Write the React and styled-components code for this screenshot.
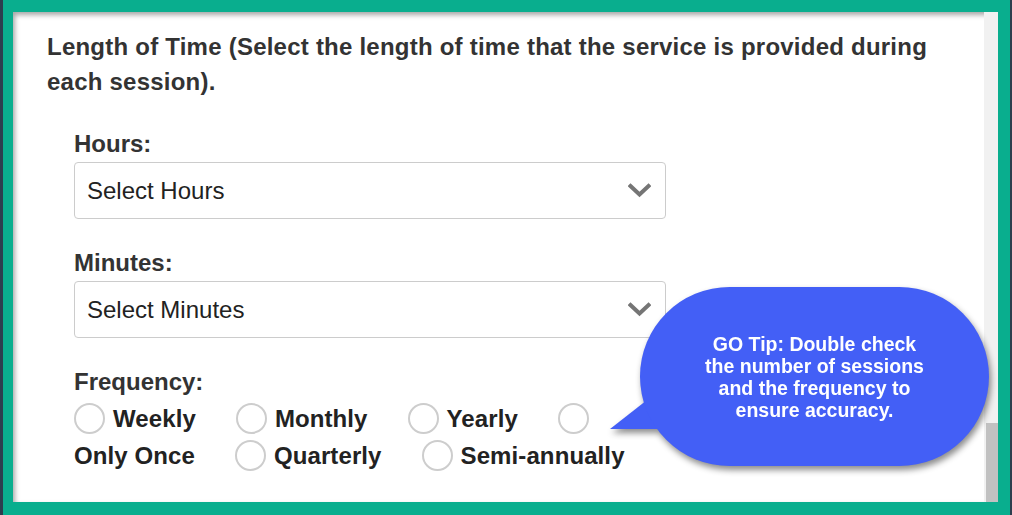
import React from 'react';
import styled, { createGlobalStyle } from 'styled-components';

const GlobalStyle = createGlobalStyle`
  html, body {
    margin: 0;
    padding: 0;
    overflow: hidden;
  }
  body {
    font-family: "Liberation Sans", Arial, sans-serif;
  }
`;

const Frame = styled.div`
  box-sizing: border-box;
  width: 1012px;
  height: 515px;
  display: flex;
  padding: 0 2px 0 3px;
  background: #2c3e4e;
`;

const TealBorder = styled.div`
  flex: 1;
  display: flex;
  padding: 12px 12px 13px 10px;
  background: #09ae8e;
`;

const Panel = styled.div`
  position: relative;
  flex: 1;
  display: flex;
  overflow: hidden;
  background: #fff;
  box-shadow: inset 2px 3px 5px rgba(0, 0, 0, 0.35);
`;

const Content = styled.div`
  flex: 1;
  padding: 17px 20px 0 34px;
`;

const Heading = styled.h3`
  margin: 0 0 31px;
  color: #333;
  font-size: 24px;
  font-weight: 700;
  line-height: 35px;
  letter-spacing: 0.23px;
`;

const Group = styled.div`
  margin: 0 0 30px 27px;
  width: 592px;
`;

const Label = styled.div`
  margin-bottom: 4px;
  color: #333;
  font-size: 24px;
  font-weight: 700;
  line-height: 28px;
`;

const SelectBox = styled.div`
  box-sizing: border-box;
  height: 57px;
  display: flex;
  align-items: center;
  justify-content: space-between;
  padding: 0 14px 0 12px;
  border: 1px solid #ccc;
  border-radius: 4px;
  color: #222;
  font-size: 24px;

  svg {
    display: block;
  }
`;

const Options = styled.div`
  display: flex;
  flex-wrap: wrap;
  align-items: center;
`;

const Option = styled.div`
  height: 37px;
  display: flex;
  align-items: center;
  margin-right: ${(p) => (p.$tight ? '8px' : '40px')};
  color: #222;
  font-size: 24px;
  font-weight: 700;
  letter-spacing: 0.1px;
`;

const Radio = styled.span`
  box-sizing: border-box;
  width: 31px;
  height: 31px;
  margin-right: ${(p) => (p.$alone ? '0' : '8px')};
  border: 2px solid #cdcdcd;
  border-radius: 50%;
  background: #fff;
`;

const Scrollbar = styled.div`
  width: 14px;
  display: flex;
  flex-direction: column;
  justify-content: flex-end;
  padding-left: 2px;
  box-sizing: border-box;
  background: #f1f1f1;
`;

const Thumb = styled.div`
  height: 79px;
  background: #c1c1c1;
`;

const Bubble = styled.div`
  position: absolute;
  left: 597px;
  top: 275px;
  width: 379px;
  height: 179px;
  filter: drop-shadow(2px 4px 3px rgba(0, 0, 0, 0.45));

  &::before {
    content: '';
    position: absolute;
    left: 0;
    top: 100px;
    width: 60px;
    height: 42px;
    background: #435ff6;
    clip-path: polygon(0 100%, 58% 35%, 100% 0, 100% 100%);
  }
`;

const Pill = styled.div`
  position: absolute;
  left: 30px;
  top: 0;
  width: 349px;
  height: 179px;
  display: flex;
  align-items: center;
  justify-content: center;
  border-radius: 90px;
  background: #435ff6;
`;

const TipText = styled.div`
  width: 226px;
  color: #fff;
  font-size: 19.5px;
  font-weight: 700;
  line-height: 22px;
  text-align: center;
`;

const Chevron = () => (
  <svg width="23" height="15" viewBox="0 0 23 15">
    <polyline
      points="2.5,3 11.5,11.5 20.5,3"
      fill="none"
      stroke="#757575"
      strokeWidth="4"
      strokeLinecap="square"
    />
  </svg>
);

const Select = ({ children }) => (
  <SelectBox>
    <span>{children}</span>
    <Chevron />
  </SelectBox>
);

export default function App() {
  return (
    <Frame>
      <GlobalStyle />
      <TealBorder>
        <Panel>
          <Content>
            <Heading>
              Length of Time (Select the length of time that the service is provided during each session).
            </Heading>
            <Group>
              <Label>Hours:</Label>
              <Select>Select Hours</Select>
            </Group>
            <Group>
              <Label>Minutes:</Label>
              <Select>Select Minutes</Select>
            </Group>
            <Group>
              <Label>Frequency:</Label>
              <Options>
                <Option><Radio />Weekly</Option>
                <Option><Radio />Monthly</Option>
                <Option><Radio />Yearly</Option>
                <Option $tight><Radio $alone /></Option>
                <Option>Only Once</Option>
                <Option><Radio />Quarterly</Option>
                <Option><Radio />Semi-annually</Option>
              </Options>
            </Group>
          </Content>
          <Scrollbar>
            <Thumb />
          </Scrollbar>
          <Bubble>
            <Pill>
              <TipText>
                GO Tip: Double check the number of sessions and the frequency to ensure accuracy.
              </TipText>
            </Pill>
          </Bubble>
        </Panel>
      </TealBorder>
    </Frame>
  );
}
